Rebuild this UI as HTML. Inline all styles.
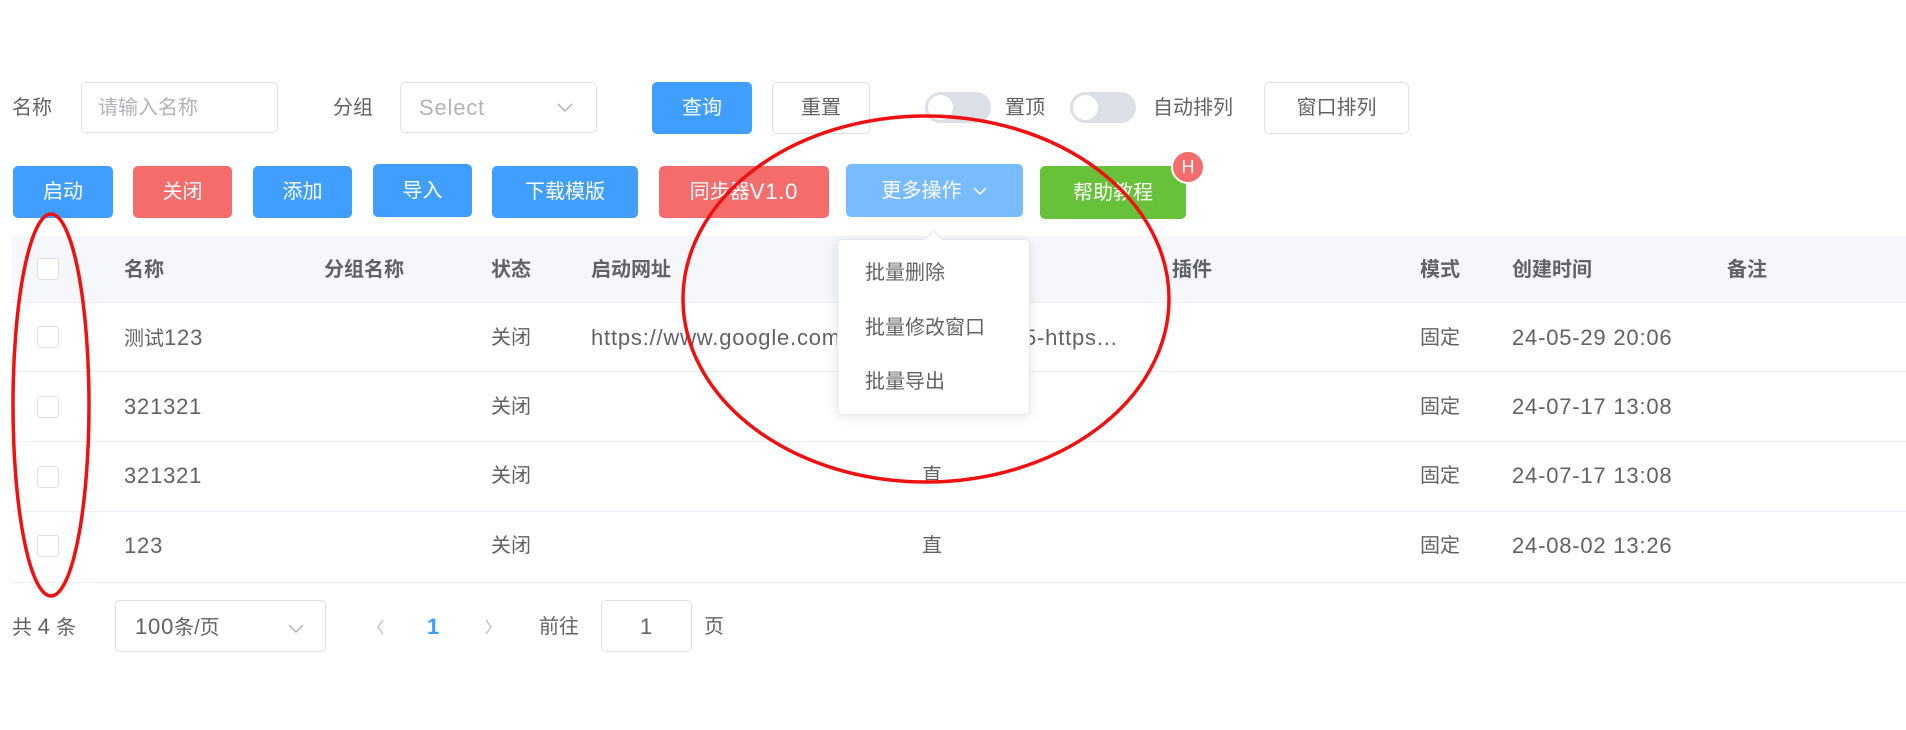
<!DOCTYPE html>
<html><head><meta charset="utf-8"><style>
body{margin:0;width:1906px;height:730px;background:#fff;position:relative;overflow:hidden;font-family:"Liberation Sans","Noto Sans CJK SC",sans-serif;color:#606266;font-size:20px;line-height:26px}
.a{position:absolute;white-space:nowrap;line-height:26px}
.l{font-size:22px;letter-spacing:0.8px}
.box{position:absolute;border:1px solid #dcdfe6;border-radius:5px;box-sizing:border-box;background:#fff}
.btn{position:absolute;border-radius:5px;color:#fff;display:flex;align-items:center;justify-content:center;font-size:20px;box-sizing:border-box;line-height:26px}
.cb{position:absolute;left:37px;width:22px;height:22px;border:1px solid #dcdfe6;border-radius:3px;box-sizing:border-box;background:#fff}
.line{position:absolute;left:12px;right:0;height:1px;background:#ebeef5}
.tg{position:absolute;width:66px;height:31px;border-radius:16px;background:#dcdfe6}
.tg::after{content:"";position:absolute;left:3px;top:3px;width:25px;height:25px;border-radius:50%;background:#fff}
.h{font-weight:bold;color:#606266}
</style></head><body>
<div class="a" style="left:12px;top:95px">名称</div>
<div class="box" style="left:81px;top:82px;width:197px;height:51px"></div>
<div class="a" style="left:98px;top:95px;color:#b0b3b8">请输入名称</div>
<div class="a" style="left:333px;top:95px">分组</div>
<div class="box" style="left:400px;top:82px;width:197px;height:51px"></div>
<div class="a l" style="left:419px;top:95px;color:#b0b3b8">Select</div>
<svg class="a" style="left:556px;top:101px" width="18" height="12"><path d="M2 3l7 7 7-7" fill="none" stroke="#b0b3b8" stroke-width="1.5"/></svg>
<div class="btn" style="left:652px;top:82px;width:100px;height:52px;background:#409eff">查询</div>
<div class="btn" style="left:772px;top:82px;width:98px;height:52px;border:1px solid #dcdfe6;color:#606266">重置</div>
<div class="tg" style="left:925px;top:92px"></div>
<div class="a" style="left:1005px;top:95px">置顶</div>
<div class="tg" style="left:1070px;top:92px"></div>
<div class="a" style="left:1153px;top:95px">自动排列</div>
<div class="btn" style="left:1264px;top:82px;width:145px;height:52px;border:1px solid #dcdfe6;color:#606266">窗口排列</div>

<div class="btn" style="left:13px;top:166px;width:100px;height:52px;background:#409eff">启动</div>
<div class="btn" style="left:133px;top:166px;width:99px;height:52px;background:#f56c6c">关闭</div>
<div class="btn" style="left:253px;top:166px;width:99px;height:52px;background:#409eff">添加</div>
<div class="btn" style="left:373px;top:164px;width:99px;height:53px;background:#409eff">导入</div>
<div class="btn" style="left:492px;top:166px;width:146px;height:52px;background:#409eff">下载模版</div>
<div class="btn" style="left:659px;top:166px;width:170px;height:52px;background:#f56c6c">同步器<span class="l">V1.0</span></div>
<div class="btn" style="left:846px;top:164px;width:177px;height:53px;background:#79bbff">更多操作<svg style="margin-left:10px" width="16" height="10"><path d="M2 2l6 6 6-6" fill="none" stroke="#fff" stroke-width="1.5"/></svg></div>
<div class="btn" style="left:1040px;top:166px;width:146px;height:53px;background:#67c23a">帮助教程</div>
<div class="btn" style="left:1171px;top:150px;width:34px;height:34px;border-radius:50%;background:#f56c6c;border:2px solid #fff;font-size:18px">H</div>

<div style="position:absolute;left:12px;right:0;top:236px;height:66px;background:#f5f7fa"></div>
<div class="line" style="top:302px"></div>
<div class="line" style="top:371px"></div>
<div class="line" style="top:441px"></div>
<div class="line" style="top:511px"></div>
<div class="line" style="top:582px"></div>
<div class="cb" style="top:258px"></div>
<div class="cb" style="top:326px"></div>
<div class="cb" style="top:396px"></div>
<div class="cb" style="top:466px"></div>
<div class="cb" style="top:535px"></div>
<div class="a h" style="left:124px;top:257px">名称</div>
<div class="a h" style="left:324px;top:257px">分组名称</div>
<div class="a h" style="left:491px;top:257px">状态</div>
<div class="a h" style="left:591px;top:257px">启动网址</div>
<div class="a h" style="left:1172px;top:257px">插件</div>
<div class="a h" style="left:1420px;top:257px">模式</div>
<div class="a h" style="left:1512px;top:257px">创建时间</div>
<div class="a h" style="left:1727px;top:257px">备注</div>

<div class="a" style="left:124px;top:325px">测试<span class="l">123</span></div>
<div class="a" style="left:491px;top:325px">关闭</div>
<div class="a l" style="left:591px;top:325px">https://www.google.com</div>
<div class="a l" style="left:1024px;top:325px">5-https...</div>
<div class="a" style="left:1420px;top:325px">固定</div>
<div class="a l" style="left:1512px;top:325px">24-05-29 20:06</div>

<div class="a l" style="left:124px;top:394px">321321</div>
<div class="a" style="left:491px;top:394px">关闭</div>
<div class="a" style="left:1420px;top:394px">固定</div>
<div class="a l" style="left:1512px;top:394px">24-07-17 13:08</div>

<div class="a l" style="left:124px;top:463px">321321</div>
<div class="a" style="left:491px;top:463px">关闭</div>
<div class="a" style="left:922px;top:463px">直</div>
<div class="a" style="left:1420px;top:463px">固定</div>
<div class="a l" style="left:1512px;top:463px">24-07-17 13:08</div>

<div class="a l" style="left:124px;top:533px">123</div>
<div class="a" style="left:491px;top:533px">关闭</div>
<div class="a" style="left:922px;top:533px">直</div>
<div class="a" style="left:1420px;top:533px">固定</div>
<div class="a l" style="left:1512px;top:533px">24-08-02 13:26</div>

<div style="position:absolute;left:837px;top:239px;width:193px;height:176px;background:#fff;border:1px solid #e4e7ed;border-radius:5px;box-sizing:border-box;box-shadow:0 2px 12px rgba(0,0,0,.1)"></div>
<div style="position:absolute;left:927px;top:233px;width:12px;height:12px;background:#fff;transform:rotate(45deg);border-left:1px solid #e4e7ed;border-top:1px solid #e4e7ed"></div>
<div class="a" style="left:865px;top:260px">批量删除</div>
<div class="a" style="left:865px;top:315px">批量修改窗口</div>
<div class="a" style="left:865px;top:369px">批量导出</div>

<div class="a" style="left:12px;top:614px">共 <span class="l">4</span> 条</div>
<div class="box" style="left:115px;top:600px;width:211px;height:52px"></div>
<div class="a" style="left:135px;top:614px"><span class="l">100</span>条/页</div>
<svg class="a" style="left:287px;top:622px" width="18" height="12"><path d="M2 3l7 7 7-7" fill="none" stroke="#b0b3b8" stroke-width="1.5"/></svg>
<svg class="a" style="left:376px;top:618px" width="10" height="18"><path d="M7 2L2 9l5 7" fill="none" stroke="#c0c4cc" stroke-width="1.5"/></svg>
<div class="a l" style="left:427px;top:614px;color:#409eff;font-weight:bold">1</div>
<svg class="a" style="left:483px;top:618px" width="10" height="18"><path d="M3 2l5 7-5 7" fill="none" stroke="#c0c4cc" stroke-width="1.5"/></svg>
<div class="a" style="left:539px;top:614px">前往</div>
<div class="box" style="left:601px;top:600px;width:91px;height:52px"></div>
<div class="a l" style="left:640px;top:614px">1</div>
<div class="a" style="left:704px;top:614px">页</div>

<svg class="a" style="left:0;top:0" width="1906" height="730">
<ellipse cx="51" cy="405" rx="38" ry="191" fill="none" stroke="#f01010" stroke-width="3.5"/>
<ellipse cx="926" cy="299" rx="243" ry="183" fill="none" stroke="#f01010" stroke-width="3.5"/>
</svg>
</body></html>
